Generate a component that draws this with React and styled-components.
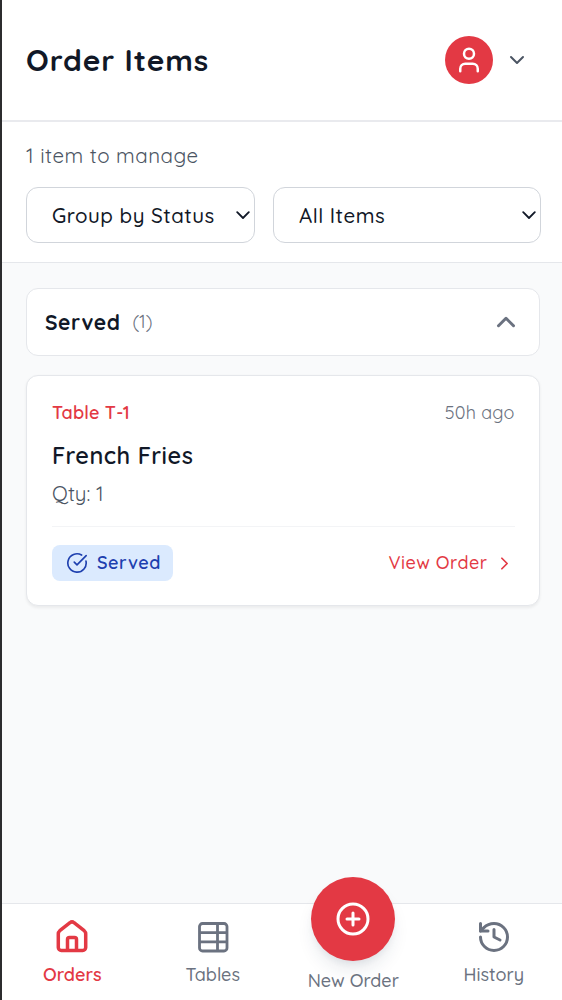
import React from "react";
import styled, { createGlobalStyle } from "styled-components";
import { User, ChevronDown, ChevronUp, ChevronRight, CircleCheckBig, CirclePlus, History } from "lucide-react";

const GlobalStyle = createGlobalStyle`
  * { box-sizing: border-box; }
  html, body { margin: 0; padding: 0; overflow: hidden; }
  body { font-family: Quicksand, Lato, "Open Sans", sans-serif; color: #111827; }
  svg { display: block; flex: none; }
  button { font: inherit; color: inherit; background: none; border: 0; padding: 0; }
`;

const Window = styled.div`
  height: 1000px;
  overflow: hidden;
  border-left: 2px solid #2c2c2e;
`;

const Shell = styled.div`
  width: 562px;
  height: 1000px;
  display: flex;
  flex-direction: column;
  background: #f9fafb;
`;

const Text = styled.span`
  font-size: ${(p) => p.$size}px;
  line-height: ${(p) => p.$line || 28}px;
  font-weight: ${(p) => p.$weight || 400};
  letter-spacing: ${(p) => p.$spacing || 0}px;
  color: ${(p) => p.$color || "#111827"};
  white-space: nowrap;
`;

const Header = styled.header`
  height: 122px;
  padding: 0 24px;
  display: flex;
  align-items: center;
  justify-content: space-between;
  background: #fff;
  border-bottom: 2px solid #e9eaee;
`;

const AccountButton = styled.button`
  display: flex;
  align-items: center;
  gap: 12px;
  padding-right: 11.5px;
  color: #4b5563;
`;

const Avatar = styled.span`
  width: 48px;
  height: 48px;
  border-radius: 50%;
  display: grid;
  place-items: center;
  color: #fff;
  background: #e33944;
`;

const Filters = styled.section`
  height: 141px;
  padding: 19px 24px 0;
  background: #fff;
  border-bottom: 1.5px solid #e5e7eb;
`;

const SelectRow = styled.div`
  display: grid;
  grid-template-columns: 229px 267.5px;
  gap: 18px;
  margin-top: 18px;
`;

const Select = styled.button`
  height: 56px;
  padding: 0 4px 0 25px;
  display: flex;
  align-items: center;
  justify-content: space-between;
  background: #fff;
  border: 1.5px solid #d1d5db;
  border-radius: 12px;
`;

const Main = styled.main`
  flex: 1;
  padding: 25px 24px 0;
  display: flex;
  flex-direction: column;
  gap: 19px;
`;

const GroupHeader = styled.button`
  height: 68px;
  padding: 0 18px;
  display: flex;
  align-items: center;
  justify-content: space-between;
  color: #6b7280;
  background: #fff;
  border: 1.5px solid #e5e7eb;
  border-radius: 12px;
`;

const GroupLabel = styled.span`
  display: flex;
  align-items: center;
  gap: 12px;
`;

const Card = styled.article`
  height: 231px;
  padding: 23px 24.5px 0 25px;
  background: #fff;
  border: 1.5px solid #e5e7eb;
  border-radius: 12px;
  box-shadow: 0 1.5px 3px rgba(0, 0, 0, 0.06);
`;

const CardRow = styled.div`
  display: flex;
  align-items: center;
  justify-content: space-between;
`;

const CardBody = styled.div`
  display: flex;
  flex-direction: column;
  padding: 12px 0 19px;
  gap: 8px;
`;

const CardFooter = styled(CardRow)`
  padding-top: 18px;
  border-top: 1.5px solid #f3f4f6;
`;

const Badge = styled.span`
  width: 121px;
  height: 36px;
  padding-left: 14px;
  display: flex;
  align-items: center;
  gap: 9px;
  color: #1e40af;
  background: #dbeafe;
  border-radius: 8px;
`;

const LinkButton = styled.button`
  display: flex;
  align-items: center;
  gap: 6px;
  color: #e33944;
`;

const Nav = styled.nav`
  height: 97px;
  display: grid;
  grid-template-columns: repeat(4, 1fr);
  background: #fff;
  border-top: 1.5px solid #e5e7eb;
`;

const NavItem = styled.button`
  display: flex;
  flex-direction: column;
  align-items: center;
  justify-content: flex-start;
  padding-top: ${(p) => (p.$raised ? 0 : 15)}px;
  gap: 6px;
  color: ${(p) => (p.$active ? "#e33944" : "#6b7280")};
`;

const Fab = styled.span`
  width: 84px;
  height: 84px;
  margin-top: -27px;
  border-radius: 50%;
  display: grid;
  place-items: center;
  color: #fff;
  background: #e33944;
  box-shadow: 0 12px 18px -3px rgba(30, 50, 80, 0.1), 0 4px 7px -2px rgba(30, 50, 80, 0.08);
`;

const HomeIcon = () => (
  <svg width="36" height="36" viewBox="0 0 36 36" fill="none" stroke="currentColor" strokeWidth="3.5" strokeLinejoin="round">
    <path d="M4.3 14.8c0-1.3.5-2.2 1.5-3.1L16 3.7a3 3 0 0 1 4 0l10.2 8c1 .9 1.5 1.8 1.5 3.1v13.6a3 3 0 0 1-3 3H7.300a3 3 0 0 1-3-3z" />
    <path d="M13.500 31V20.400a2 2 0 0 1 2-2h5a2 2 0 0 1 2 2V31" />
  </svg>
);

const TableIcon = () => (
  <svg width="36" height="36" viewBox="0 0 36 36" fill="none" stroke="currentColor" strokeWidth="2.8">
    <rect x="4.500" y="4.500" width="27.500" height="27.500" rx="3" />
    <path d="M4.500 13.600H32M4.500 22.900H32M22.500 4.500V32" />
  </svg>
);

const SelectArrow = () => (
  <svg width="14" height="9" viewBox="0 0 14 9" fill="none" stroke="#111827" strokeWidth="1.8" strokeLinecap="round" strokeLinejoin="round">
    <path d="M1.200 1.200 7 7 12.800 1.200" />
  </svg>
);

export default function App() {
  return (
    <>
      <GlobalStyle />
      <Window>
        <Shell>
          <Header>
            <Text as="h1" style={{ margin: 0 }} $size={30} $line={36} $weight={700} $spacing={0.9}>Order Items</Text>
            <AccountButton>
              <Avatar><User size={30} strokeWidth={2} /></Avatar>
              <ChevronDown size={24} strokeWidth={2} />
            </AccountButton>
          </Header>
          <Filters>
            <Text as="div" $size={20.500} $color="#4b5563" $spacing={0.5}>1 item to manage</Text>
            <SelectRow>
              <Select><Text $size={20.500} $weight={500} $spacing={0.5}>Group by Status</Text><SelectArrow /></Select>
              <Select><Text $size={20.500} $weight={500} $spacing={0.5}>All Items</Text><SelectArrow /></Select>
            </SelectRow>
          </Filters>
          <Main>
            <GroupHeader>
              <GroupLabel>
                <Text $size={21} $weight={700} $spacing={0.5}>Served</Text>
                <Text $size={18} $color="#6b7280">(1)</Text>
              </GroupLabel>
              <ChevronUp size={30} strokeWidth={2.4} />
            </GroupHeader>
            <Card>
              <CardRow>
                <Text $size={18} $weight={600} $color="#e33944" $spacing={0.2}>Table T-1</Text>
                <Text $size={18} $color="#6b7280" $spacing={0.2}>50h ago</Text>
              </CardRow>
              <CardBody>
                <Text $size={23.500} $line={32} $weight={600} $spacing={0.5}>French Fries</Text>
                <Text $size={20.500} $color="#4b5563">Qty: 1</Text>
              </CardBody>
              <CardFooter>
                <Badge>
                  <CircleCheckBig size={22} strokeWidth={1.8} />
                  <Text $size={18} $weight={600} $color="#1e40af" $spacing={0.5}>Served</Text>
                </Badge>
                <LinkButton>
                  <Text $size={18} $weight={500} $color="#e33944" $spacing={0.5}>View Order</Text>
                  <ChevronRight size={21} strokeWidth={2} />
                </LinkButton>
              </CardFooter>
            </Card>
          </Main>
          <Nav>
            <NavItem $active><HomeIcon /><Text $size={18} $weight={600} $color="#e33944">Orders</Text></NavItem>
            <NavItem><TableIcon /><Text $size={18} $weight={500} $color="#6b7280">Tables</Text></NavItem>
            <NavItem $raised><Fab><CirclePlus size={36} strokeWidth={2} /></Fab><Text $size={18} $weight={500} $color="#6b7280">New Order</Text></NavItem>
            <NavItem><History size={36} strokeWidth={2} /><Text $size={18} $weight={500} $color="#6b7280">History</Text></NavItem>
          </Nav>
        </Shell>
      </Window>
    </>
  );
}
